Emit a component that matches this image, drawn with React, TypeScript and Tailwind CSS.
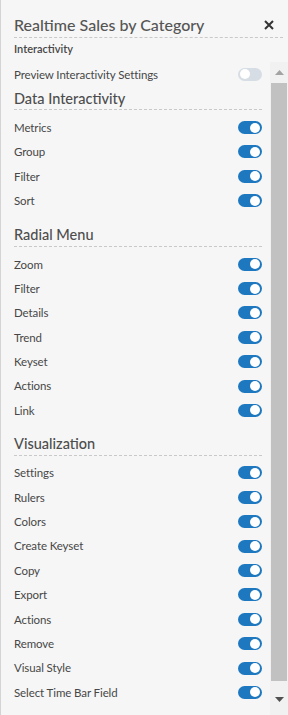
import React from "react";

const Toggle = ({ on = true }: { on?: boolean }) => (
  <div
    className={`w-[24px] h-[13px] rounded-full flex items-center px-[2px] ${
      on ? "bg-[#1d78bf] justify-end" : "bg-[#d6dde4] justify-start"
    }`}
  >
    <div className="w-[10px] h-[10px] rounded-full bg-white" />
  </div>
);

const Row = ({ label, on = true }: { label: string; on?: boolean }) => (
  <div className="h-[24.4px] flex items-center justify-between">
    <span className="text-[11.5px] tracking-[-0.1px] text-[#474747]">{label}</span>
    <Toggle on={on} />
  </div>
);

const Heading = ({ text, mt }: { text: string; mt: string }) => (
  <div className={`${mt} h-[22px] flex items-center border-b border-dashed border-[#c9c9c9] mb-[5px]`}>
    <span className="text-[14.5px] leading-[20px] text-[#4d4d4d] font-medium">{text}</span>
  </div>
);

export default function App() {
  const data = ["Metrics", "Group", "Filter", "Sort"];
  const radial = ["Zoom", "Filter", "Details", "Trend", "Keyset", "Actions", "Link"];
  const vis = [
    "Settings",
    "Rulers",
    "Colors",
    "Create Keyset",
    "Copy",
    "Export",
    "Actions",
    "Remove",
    "Visual Style",
    "Select Time Bar Field",
  ];
  return (
    <div
      className="w-[288px] h-[715px] bg-[#f6f6f6] border-l border-[#d4d4d4] flex flex-col overflow-hidden"
      style={{ fontFamily: "Lato, 'Noto Sans', sans-serif" }}
    >
      <div className="mx-[13px] mr-[5px] pt-[12px] h-[38px] flex items-center justify-between border-b border-dashed border-[#c9c9c9]">
        <span className="text-[16px] leading-[22px] text-[#555] font-medium">
          Realtime Sales by Category
        </span>
        <svg width="10" height="10" viewBox="0 0 10 10" className="mr-[9px]">
          <path d="M1 1L9 9M9 1L1 9" stroke="#333" strokeWidth="2" />
        </svg>
      </div>
      <div className="px-[13px] h-[24px] flex items-center pb-[2px]">
        <span className="text-[11px] text-[#474747] font-semibold">Interactivity</span>
      </div>
      <div className="flex-1 flex min-h-0">
        <div className="flex-1 pl-[13px] pr-[8px]">
          <Row label="Preview Interactivity Settings" on={false} />
          <Heading text="Data Interactivity" mt="mt-[2px]" />
          {data.map((d) => (
            <Row key={d} label={d} />
          ))}
          <Heading text="Radial Menu" mt="mt-[12px]" />
          {radial.map((d, i) => (
            <Row key={d + i} label={d} />
          ))}
          <Heading text="Visualization" mt="mt-[11px]" />
          {vis.map((d, i) => (
            <Row key={d + i} label={d} />
          ))}
        </div>
        <div className="w-[18px] bg-[#f1f1f1] flex flex-col">
          <div className="h-[21px] flex items-center justify-center">
            <svg width="9" height="5" viewBox="0 0 9 5">
              <path d="M0 5L4.5 0L9 5Z" fill="#a3a3a3" />
            </svg>
          </div>
          <div className="flex-1 bg-[#c1c1c1] mx-[1px] mb-[2px]" />
          <div className="h-[32px] flex items-center justify-center">
            <svg width="9" height="5" viewBox="0 0 9 5">
              <path d="M0 0L4.5 5L9 0Z" fill="#505050" />
            </svg>
          </div>
        </div>
      </div>
    </div>
  );
}
